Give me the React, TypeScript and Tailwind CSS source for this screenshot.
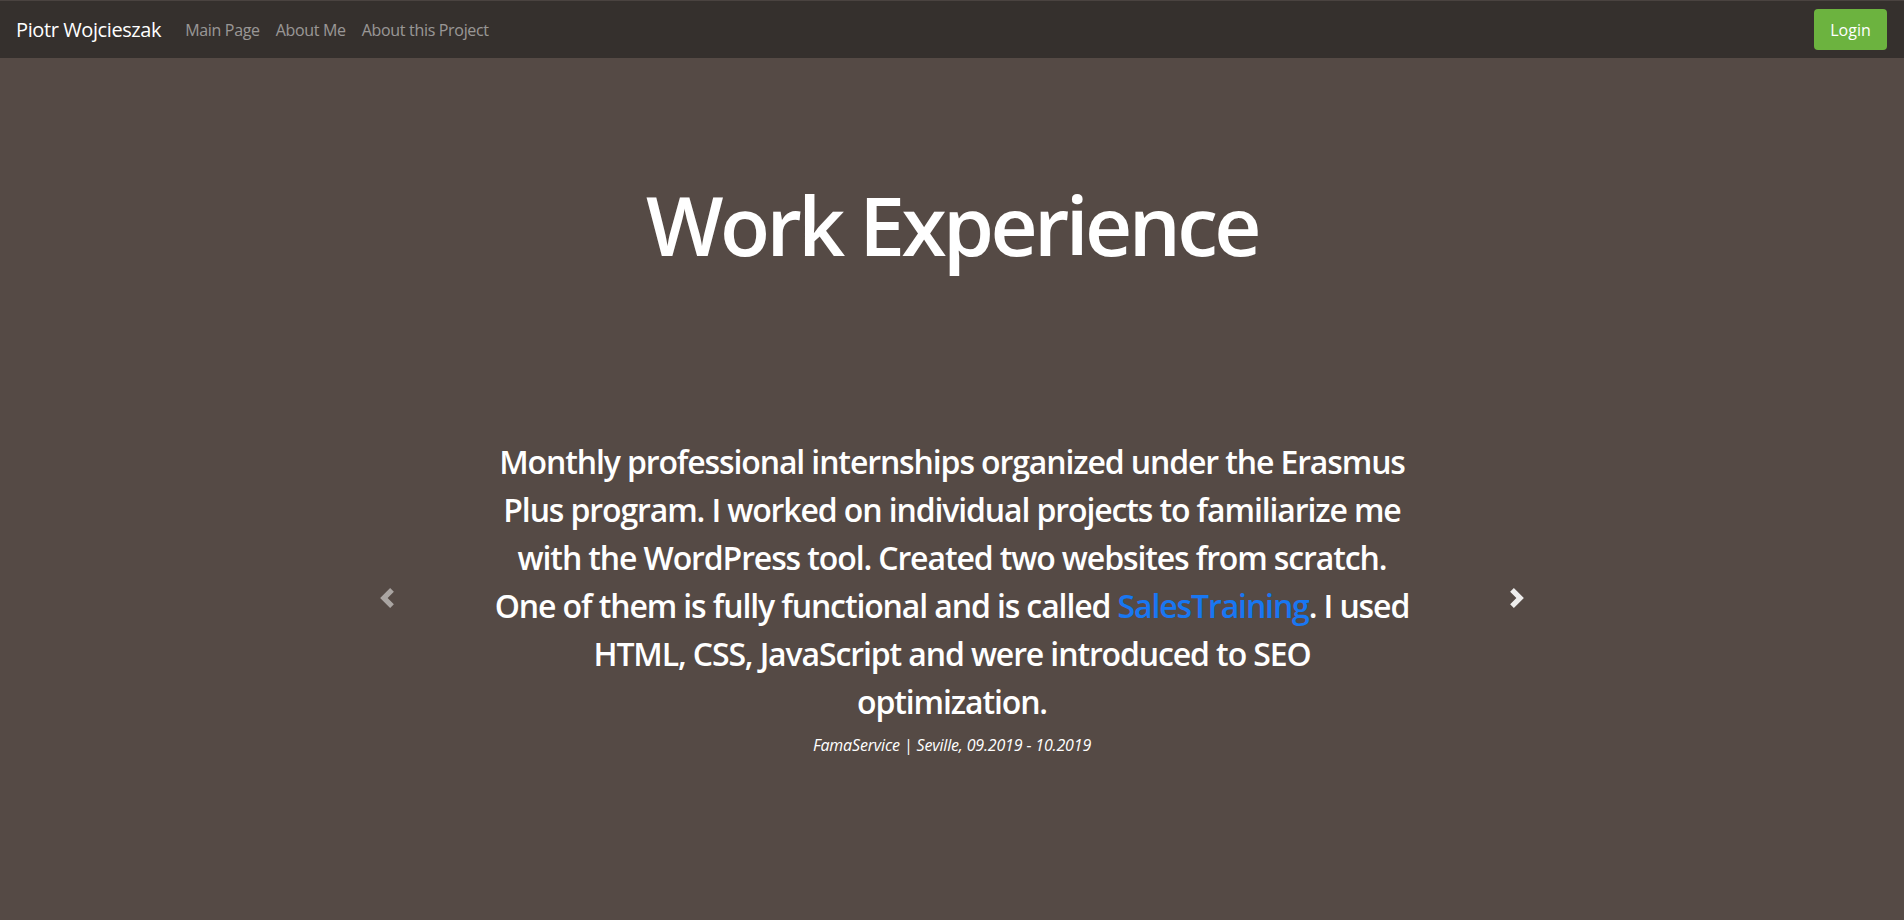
import React from 'react'

function PrevIcon() {
  return (
    <svg viewBox="0 0 8 8" className="w-5 h-5" fill="#fff">
      <path d="M5.25 0l-4 4 4 4 1.5-1.5L4.25 4l2.5-2.5L5.25 0z" />
    </svg>
  )
}

function NextIcon() {
  return (
    <svg viewBox="0 0 8 8" className="w-5 h-5" fill="#fff">
      <path d="M2.75 0l-1.5 1.5L3.75 4l-2.5 2.5L2.75 8l4-4-4-4z" />
    </svg>
  )
}

export default function App() {
  return (
    <div className="min-h-screen bg-[#554a45] text-white font-['Open_Sans','Noto_Sans',sans-serif]">
      <nav className="h-[58px] bg-[#35302d] border-t border-[#4a4340] flex items-center justify-between pl-4 pr-[17px]">
        <div className="flex items-center">
          <a href="#" className="text-[20px] text-white mr-4 tracking-[-0.02em]">Piotr Wojcieszak</a>
          <ul className="flex items-center text-[16px] text-white/50 tracking-[-0.02em]">
            <li className="px-2"><a href="#">Main Page</a></li>
            <li className="px-2"><a href="#">About Me</a></li>
            <li className="px-2"><a href="#">About this Project</a></li>
          </ul>
        </div>
        <button className="h-[41px] w-[73px] rounded bg-[#6cb33f] text-white text-[16px]">Login</button>
      </nav>

      <main>
        <h1 className="mt-[117px] text-center text-[82px] leading-[1.2] font-semibold tracking-[-0.044em]">Work Experience</h1>

        <section className="mt-[165px] w-[1150px] mx-auto flex items-center justify-between">
          <button className="opacity-50"><PrevIcon /></button>
          <div className="text-center">
            <p className="text-[32px] leading-[48px] font-semibold tracking-[-0.035em]">
              Monthly professional internships organized under the Erasmus<br />
              Plus program. I worked on individual projects to familiarize me<br />
              with the WordPress tool. Created two websites from scratch.<br />
              One of them is fully functional and is called <a href="#" className="text-[#1877f2]">SalesTraining</a>. I used<br />
              HTML, CSS, JavaScript and were introduced to SEO<br />
              optimization.
            </p>
            <p className="mt-[7px] text-[16px] leading-6 italic tracking-[-0.01em]">FamaService | Seville, 09.2019 - 10.2019</p>
          </div>
          <button className="opacity-90"><NextIcon /></button>
        </section>
      </main>
    </div>
  )
}
